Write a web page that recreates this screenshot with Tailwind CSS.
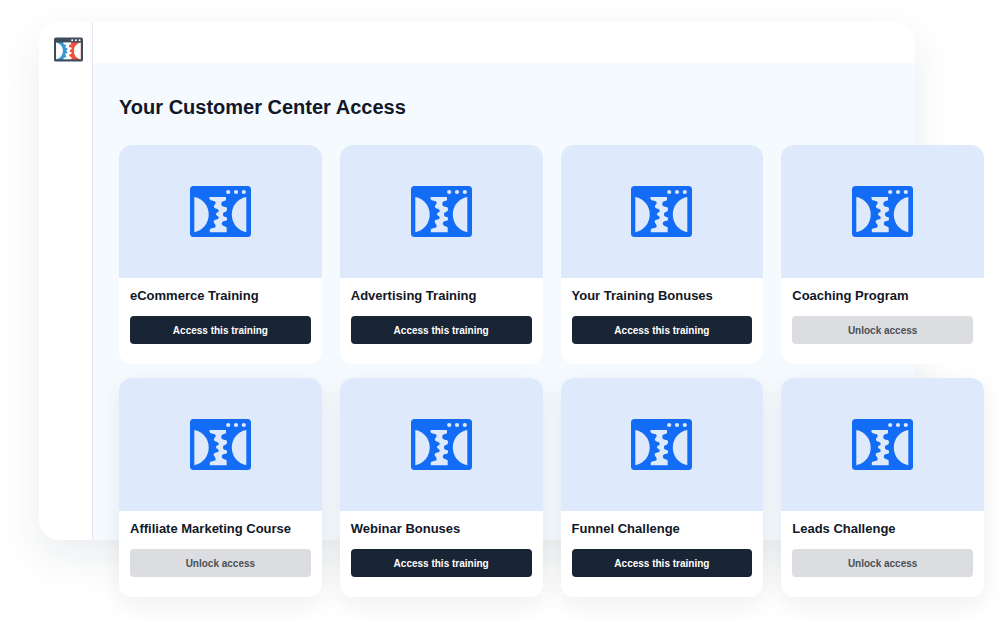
<!DOCTYPE html>
<html lang="en">
<head>
<meta charset="utf-8">
<meta name="viewport" content="width=device-width, initial-scale=1">
<title>Customer Center</title>
<script src="https://cdn.jsdelivr.net/npm/@tailwindcss/browser@4"></script>
</head>
<body class="bg-white font-['Liberation_Sans',Arial,sans-serif] text-[#111827] overflow-x-hidden">
<svg class="hidden" aria-hidden="true">
  <symbol id="gears" viewBox="0 0 61 51">
    <g fill="currentColor">
      <circle cx="38.2" cy="6" r="2.1"/><circle cx="46" cy="6" r="2.1"/><circle cx="53.8" cy="6" r="2.1"/>
      <path d="M4.300 11C13 12.500 18.700 20 18.700 28.500S13 44.500 4.300 46.200Z"/>
      <path d="M56.300 11C47.500 12.500 41.800 20 41.800 28.500S47.500 44.500 56.300 46.200Z"/>
      <path d="M19.500 11H36V14.300C34.500 15.500 31.800 14.500 31.300 17.500C31 20.500 33.500 20.700 35.500 21C37.500 21.500 37.500 24.500 36 25.500C34.500 26.300 33 26 33 28.500C33 31 35 30.500 36.500 31.300C37.500 32.300 37.300 34.300 35.800 34.800C33.500 35.300 31.800 35.300 31.800 37.500C31.800 40.500 35 39.500 36.700 41.500V46.200H19.800V43.500C21.500 41.300 25.500 43 25.700 40C25.700 38 23.300 37.300 23.700 35.300C24.300 32.700 28.700 34.500 28.700 31.500C28.700 29.700 26 30 26 28C26 26.500 28.700 26.800 28.700 24.800C28.500 22 24.800 23.500 24 21C23.500 19 25.900 18.500 25.700 16.800C25.200 13.700 20.500 15.700 19.500 12.800Z"/>
    </g>
  </symbol>
</svg>
<div class="grid pt-[22px] pr-4 pl-[39px] pb-6">
  <div class="col-start-1 row-start-1 mr-[69px] mb-[57px] flex overflow-hidden rounded-[20px] bg-white shadow-[0_16px_44px_rgba(17,40,70,0.09)]">
    <aside class="w-[54px] shrink-0 border-r border-[#e5e8ec] pt-[15px] pl-[15px]">
      <a href="#" aria-label="Home" class="block">
        <svg class="h-[25px] w-[29px] text-white" viewBox="0 0 61 51">
          <rect width="61" height="51" rx="4" fill="#3f4c5a"/>
          <path fill="#3b97d3" d="M4.300 11H30.500V46.200H4.300Z"/>
          <path fill="#f0503a" d="M30.500 11H56.300V46.200H30.500Z"/>
          <use href="#gears" width="61" height="51"/>
        </svg>
      </a>
    </aside>
    <div class="flex flex-1 flex-col">
      <header class="h-[41px] bg-white"></header>
      <div class="flex-1 bg-[#f5faff]"></div>
    </div>
  </div>
  <main class="col-start-1 row-start-1 pt-[71px] pl-20">
    <h1 class="text-xl leading-7 font-bold">Your Customer Center Access</h1>
    <div id="cards" class="mt-6 grid grid-cols-4 gap-x-[18px] gap-y-[14px]"></div>
  </main>
</div>
<template id="card">
  <article class="overflow-hidden rounded-[13px] bg-white">
    <div class="flex h-[133px] items-center justify-center bg-[#dfe9fc]">
      <svg class="h-[51px] w-[61px] text-[#dfe9fc]" viewBox="0 0 61 51" aria-hidden="true">
        <rect width="61" height="51" rx="3.5" fill="#136cf5"/>
        <use href="#gears" width="61" height="51"/>
      </svg>
    </div>
    <div class="px-[11px] pt-2 pb-5">
      <h2 class="text-[13px] leading-5 font-bold whitespace-nowrap"></h2>
      <button type="button" class="mt-[10px] block h-[28px] w-full rounded-[4px] bg-[#192434] text-[10px] font-bold text-white"></button>
    </div>
  </article>
</template>
<script>
  const courses = [
    ['eCommerce Training', true], ['Advertising Training', true], ['Your Training Bonuses', true], ['Coaching Program', false],
    ['Affiliate Marketing Course', false], ['Webinar Bonuses', true], ['Funnel Challenge', true], ['Leads Challenge', false]
  ];
  const grid = document.getElementById('cards');
  courses.forEach(([name, open], i) => {
    const card = document.getElementById('card').content.cloneNode(true);
    card.querySelector('h2').textContent = name;
    const button = card.querySelector('button');
    button.textContent = open ? 'Access this training' : 'Unlock access';
    if (!open) {
      button.classList.remove('bg-[#192434]', 'text-white');
      button.classList.add('bg-[#dcdde1]', 'text-[#4b4f56]');
    }
    if (i > 3) card.querySelector('article').classList.add('shadow-[0_8px_24px_rgba(17,24,39,0.07)]');
    grid.append(card);
  });
</script>
</body>
</html>
